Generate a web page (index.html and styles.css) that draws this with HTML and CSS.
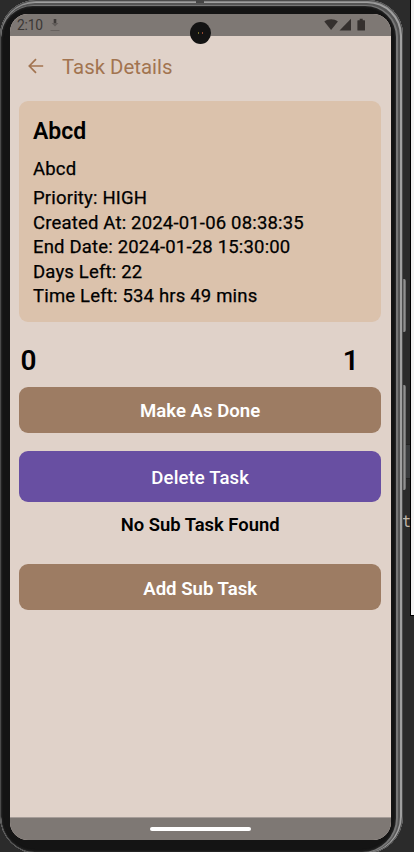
FILE: index.html
```html
<!DOCTYPE html>
<html lang="en">
<head>
<meta charset="utf-8">
<title>Task Details</title>
<link rel="stylesheet" href="styles.css">
</head>
<body>
<div class="desktop">
  <div class="window-edge"></div>
  <div class="editor-row"></div>
  <span class="editor-text">t</span>
  <i class="key key-power"></i>
  <i class="key key-volume"></i>
  <div class="phone">
    <i class="antenna"></i>
    <div class="screen">
      <header class="status">
        <span class="clock">2:10</span>
        <svg class="download" width="10" height="14" viewBox="0 0 10 14"><path d="M3.700 1h2.600v4H3.700z" fill="#3f3b39"/><path d="M1.600 5h6.800L5 8.600z" fill="#615c59"/><path d="M.5 12.500h9" stroke="#68625f"/></svg>
        <svg class="signals" width="42" height="14" viewBox="0 0 42 14" fill="#35302e"><path d="M.3 3.500C4.200.4 10 .4 13.900 3.500L7.100 12z"/><path d="M15.500 12.500H27V.8z"/><path d="M34 2.200h1.700V.8h3v1.400h1.700q.6 0 .6.6v9.100q0 .6-.6.6H34q-.6 0-.6-.6V2.800q0-.6.6-.6z"/></svg>
      </header>
      <nav class="appbar">
        <svg width="16" height="16" viewBox="0 0 16 16" fill="none" stroke="#a27450" stroke-width="1.7"><path d="M15.200 8H1.800M8 1.200 1.300 8 8 14.800"/></svg>
        <h1>Task Details</h1>
      </nav>
      <main>
        <section class="card">
          <h2>Abcd</h2>
          <p class="description">Abcd</p>
          <p>Priority: HIGH</p>
          <p>Created At: 2024-01-06 08:38:35</p>
          <p>End Date: 2024-01-28 15:30:00</p>
          <p>Days Left: 22</p>
          <p>Time Left: 534 hrs 49 mins</p>
        </section>
        <div class="counts"><span>0</span><span>1</span></div>
        <button class="done">Make As Done</button>
        <button class="delete">Delete Task</button>
        <p class="empty">No Sub Task Found</p>
        <button class="add">Add Sub Task</button>
      </main>
      <footer class="navbar"><i></i></footer>
    </div>
    <div class="camera"><i></i><i></i></div>
  </div>
</div>
</body>
</html>
```

FILE: styles.css
```css
* { box-sizing: border-box; }
body { margin: 0; font-family: Roboto, sans-serif; color: #000; }
h1, h2, p { margin: 0; }
.desktop { position: relative; width: 414px; height: 852px; overflow: hidden; background: #2b2b2b; }
.window-edge { position: absolute; left: 410px; top: -2px; width: 6px; height: 618px; background: #f2f2f2; border: 1px solid #000; }
.editor-row { position: absolute; left: 402px; top: 444px; width: 8px; height: 35px; background: #3a3c3e; border-top: 1px solid #222; border-bottom: 1px solid #222; }
.editor-text { position: absolute; left: 402px; top: 512px; font: 15px/20px "DejaVu Sans Mono", monospace; color: #c0b8ac; }
.key { position: absolute; left: 401px; width: 5px; background: linear-gradient(90deg, #5c5c5c, #707070 50%, #999 75%, #555); border-radius: 0 2px 2px 0; }
.key-power { top: 279px; height: 53px; }
.key-volume { top: 385px; height: 105px; }
.phone {
  position: relative; width: 403px; height: 854px; padding: 14px 12px 14px 10px;
  border-radius: 36px 35px 38px 38px; background: #141414;
  box-shadow: inset 0 0 0 1px #4b4b4b, inset 0 1px 0 1px #858585, inset -1px 1px 0 2px #a0a0a0, inset -2px 2px 0 3px #555, inset -3px 2px 0 4px #777, inset -3px 2px 2px 5px #292929;
}
.antenna { position: absolute; left: 196px; top: 0; width: 8px; height: 3px; background: #454545; }
.screen { width: 381px; height: 826px; display: flex; flex-direction: column; background: #e0d2c9; border-radius: 18px; overflow: hidden; }
.status { height: 22px; flex: none; display: flex; align-items: center; padding: 0 25px 0 7px; background: #7e7874; }
.clock { font-size: 13.800px; line-height: 22px; letter-spacing: -.2px; color: #3b3735; }
.download { margin-left: 7px; }
.signals { margin-left: auto; }
.appbar { height: 64.500px; flex: none; display: flex; align-items: center; padding: 0 0 4px 18px; gap: 18px; }
.appbar h1 { font-size: 20.400px; line-height: 26px; font-weight: 400; color: #a27450; padding-top: 1px; }
main { flex: 1; padding: 0 9.700px 0 9px; display: flex; flex-direction: column; }
.card { height: 221px; padding: 16.500px 14px; border-radius: 9px; background: #dbc2ac; font-size: 18.500px; line-height: 24.600px; letter-spacing: .18px; -webkit-text-stroke: .25px #000; }
.card h2 { font-size: 23px; line-height: 30px; font-weight: 600; letter-spacing: 0; -webkit-text-stroke: 0; }
.card .description { margin: 9.500px 0 5px; }
.counts { height: 38px; margin: 19px 22.500px 8px 1.500px; display: flex; justify-content: space-between; font-size: 28px; line-height: 39px; font-weight: 600; }
button { flex: none; border: 0; padding: 0; border-radius: 9px; color: #fff; font: 600 18.600px/24px Roboto, sans-serif; }
.done, .add { height: 46px; background: #9d7c63; }
.done, .add { padding-top: 3px; }
.delete { height: 51px; margin-top: 18.500px; padding-top: 2px; background: #684fa2; font-weight: 500; letter-spacing: .1px; }
.empty { margin: 11px 0 27.300px; text-align: center; font-size: 18.400px; line-height: 24px; font-weight: 600; }
.navbar { height: 23px; flex: none; display: flex; justify-content: center; align-items: center; background: #7e7874; border-top: 1px solid #a69d98; }
.navbar i { width: 101px; height: 4px; border-radius: 2px; background: #fff; }
.camera { position: absolute; left: 190px; top: 22px; width: 21px; height: 22px; border-radius: 50%; background: #131313; display: flex; align-items: center; justify-content: center; gap: 3px; }
.camera i { width: 1px; height: 2px; background: #77702c; }
.camera i + i { background: #94472f; }
```
